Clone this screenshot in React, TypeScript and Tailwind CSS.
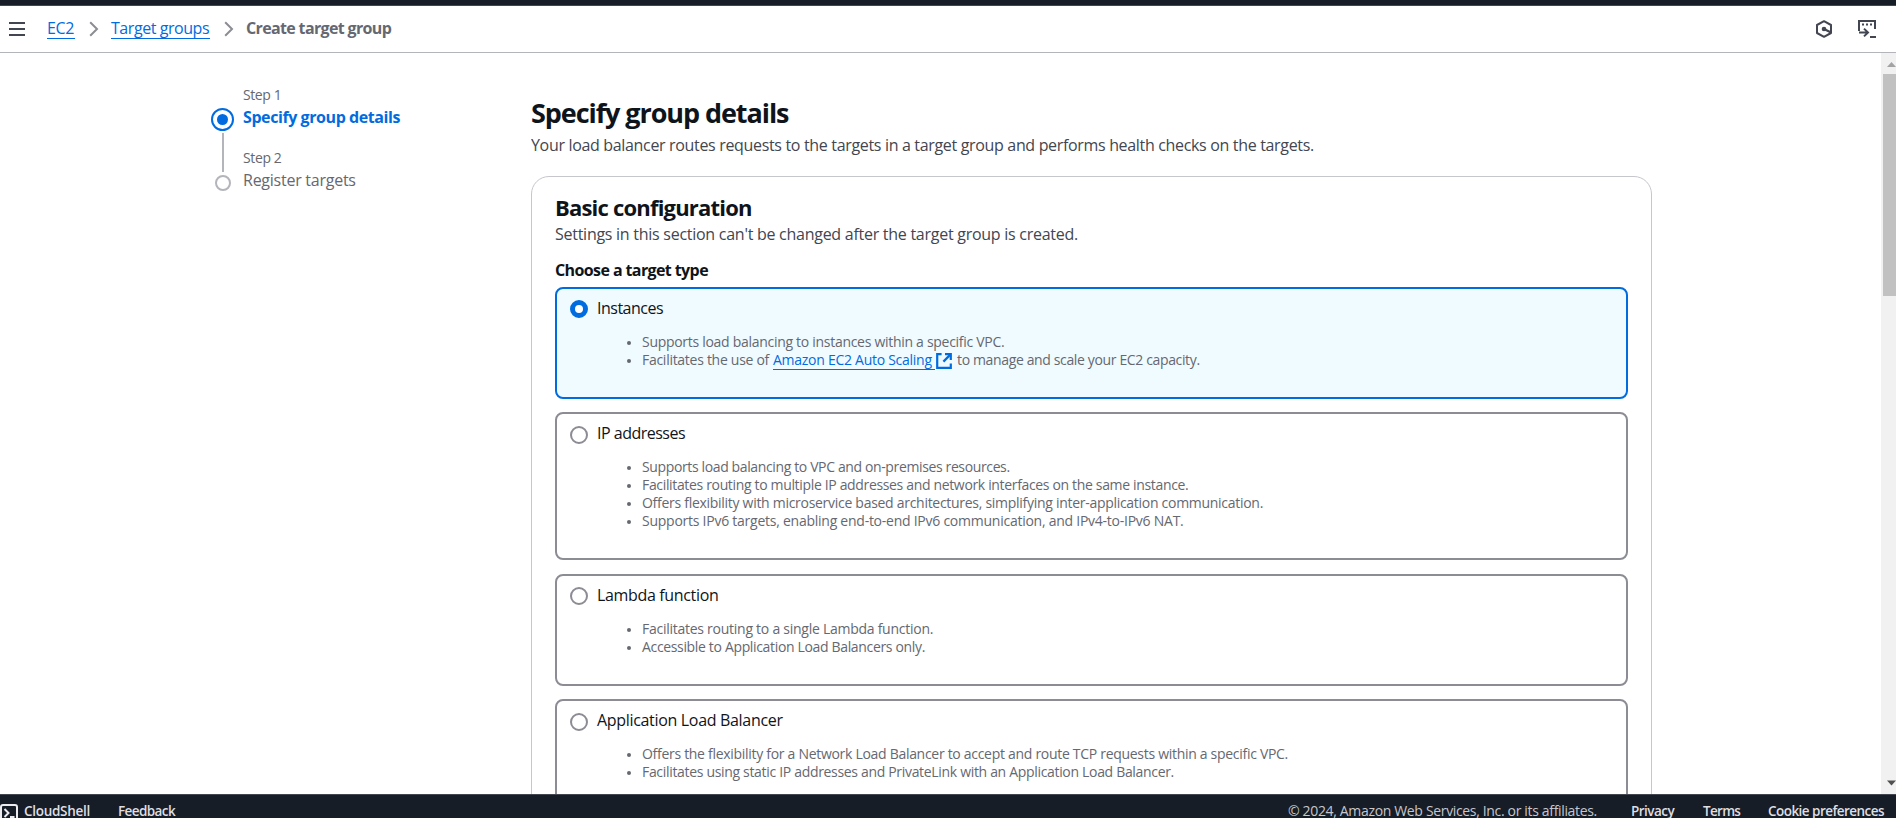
import type { ReactNode } from "react";

type Line = { content: ReactNode; tracking: string };

type TargetType = {
  label: string;
  labelTracking: string;
  size: string;
  radio: string;
  selected?: boolean;
  lines: Line[];
};

const targetTypes: TargetType[] = [
  {
    label: "Instances",
    labelTracking: "tracking-[-0.5px]",
    size: "h-28",
    radio: "mt-[11px]",
    selected: true,
    lines: [
      {
        content: "Supports load balancing to instances within a specific VPC.",
        tracking: "tracking-[-0.29px]",
      },
      { content: <AutoScalingLine />, tracking: "tracking-[-0.3px]" },
    ],
  },
  {
    label: "IP addresses",
    labelTracking: "tracking-[-0.5px]",
    size: "h-[148px] mb-px",
    radio: "mt-3",
    lines: [
      {
        content: "Supports load balancing to VPC and on-premises resources.",
        tracking: "tracking-[-0.37px]",
      },
      {
        content:
          "Facilitates routing to multiple IP addresses and network interfaces on the same instance.",
        tracking: "tracking-[-0.34px]",
      },
      {
        content:
          "Offers flexibility with microservice based architectures, simplifying inter-application communication.",
        tracking: "tracking-[-0.285px]",
      },
      {
        content:
          "Supports IPv6 targets, enabling end-to-end IPv6 communication, and IPv4-to-IPv6 NAT.",
        tracking: "tracking-[-0.25px]",
      },
    ],
  },
  {
    label: "Lambda function",
    labelTracking: "tracking-[-0.34px]",
    size: "h-28",
    radio: "mt-[11px]",
    lines: [
      {
        content: "Facilitates routing to a single Lambda function.",
        tracking: "tracking-[-0.26px]",
      },
      {
        content: "Accessible to Application Load Balancers only.",
        tracking: "tracking-[-0.34px]",
      },
    ],
  },
  {
    label: "Application Load Balancer",
    labelTracking: "tracking-[-0.32px]",
    size: "h-28",
    radio: "mt-3",
    lines: [
      {
        content:
          "Offers the flexibility for a Network Load Balancer to accept and route TCP requests within a specific VPC.",
        tracking: "tracking-[-0.295px]",
      },
      {
        content:
          "Facilitates using static IP addresses and PrivateLink with an Application Load Balancer.",
        tracking: "tracking-[-0.32px]",
      },
    ],
  },
];

function ExternalIcon() {
  return (
    <svg width="16" height="16" viewBox="0 0 16 16" fill="none" stroke="currentColor" strokeWidth="2.2">
      <path d="M5.6 1.2H1.2v13.6h13.6v-4.4" />
      <path d="M9 1.2h5.8V7" />
      <path d="M14.6 1.4 7.4 8.6" />
    </svg>
  );
}

function AutoScalingLine() {
  return (
    <span className="flex">
      <span className="w-[131px] tracking-[-0.28px]">Facilitates the use of</span>
      <span className="flex w-[184px] text-[#006ce0]">
        <span className="h-[19px] w-[162px] border-b border-[#006ce0] tracking-[-0.27px]">
          Amazon EC2 Auto Scaling
        </span>
        <span className="ml-px pt-0.5">
          <ExternalIcon />
        </span>
      </span>
      <span className="tracking-[-0.36px]">to manage and scale your EC2 capacity.</span>
    </span>
  );
}

function Crumb() {
  return (
    <svg width="10" height="16" viewBox="0 0 10 16" fill="none" stroke="#8c8c94" strokeWidth="2">
      <path d="M1.2 1.2 8 8l-6.8 6.8" />
    </svg>
  );
}

function Header() {
  return (
    <header className="flex h-[47px] shrink-0 justify-between border-b border-[#b4b4bb] pt-2 text-base leading-5">
      <nav className="flex">
        <svg className="ml-[9px] mt-2" width="16" height="14" viewBox="0 0 16 14" fill="none" stroke="#424650" strokeWidth="2">
          <path d="M0 1h16M0 7h16M0 13h16" />
        </svg>
        <a className="ml-[22px] mt-1 h-[21px] w-[28px] border-b border-[#006ce0] tracking-[-0.37px] text-[#006ce0]">
          EC2
        </a>
        <span className="ml-[14px] mt-[7px] w-[22px]">
          <Crumb />
        </span>
        <a className="mt-1 h-[21px] w-[99px] border-b border-[#006ce0] tracking-[-0.44px] text-[#006ce0]">
          Target groups
        </a>
        <span className="ml-[14px] mt-[7px] w-[22px]">
          <Crumb />
        </span>
        <span className="mt-1 font-bold tracking-[-0.65px] text-[#656871]">Create target group</span>
      </nav>
      <div className="flex gap-[26px] pr-5 pt-1.5">
        <svg width="16" height="18" viewBox="0 0 16 18" fill="none" stroke="#424650" strokeWidth="2">
          <path d="M8 1.2 15 5v8l-7 3.8L1 13V5z" strokeLinejoin="round" />
          <path d="M8 9l6.5 3.2" strokeWidth="2.2" />
          <circle cx="8" cy="9" r="2.3" fill="#424650" stroke="none" />
        </svg>
        <svg width="18" height="18" viewBox="0 0 18 18" fill="none" stroke="#424650" strokeWidth="2">
          <path d="M1 11V1h16v8" />
          <path d="M4 4.5h2M8 4.5h2M12 4.5h2" />
          <path d="M1 12.5h8.5M6 8.6l4 3.9-4 3.9M12 17h6" />
        </svg>
      </div>
    </header>
  );
}

function Steps() {
  return (
    <aside className="flex w-[531px] shrink-0 pl-[211px] pt-[32px] text-[#656871]">
      <div className="flex w-[32px] flex-col items-center pr-[9px] pt-[23px]">
        <span className="flex size-[23px] items-center justify-center rounded-full border-2 border-[#006ce0]">
          <span className="size-[11px] rounded-full bg-[#006ce0]" />
        </span>
        <span className="mt-0.5 h-[39px] w-0.5 bg-[#b4b4bb]" />
        <span className="mt-[2.5px] size-4 rounded-full border-2 border-[#b4b4bb]" />
      </div>
      <ol className="whitespace-nowrap">
        <li className="h-[63px]">
          <p className="text-sm leading-5 tracking-[-0.42px]">Step 1</p>
          <p className="mt-px text-base font-bold leading-[22px] tracking-[-0.42px] text-[#006ce0]">
            Specify group details
          </p>
        </li>
        <li>
          <p className="text-sm leading-5 tracking-[-0.38px]">Step 2</p>
          <p className="mt-px text-base leading-[22px] tracking-[-0.25px]">Register targets</p>
        </li>
      </ol>
    </aside>
  );
}

function Tile({ item }: { item: TargetType }) {
  const tone = item.selected ? "border-[#006ce0] bg-[#f0fbff]" : "border-[#8c8c94] bg-white";
  return (
    <div className={`flex shrink-0 rounded-lg border-2 pl-[13px] ${item.size} ${tone}`}>
      <div className={`w-[27px] shrink-0 ${item.radio}`}>
        {item.selected ? (
          <span className="block size-[18px] rounded-full border-[5.5px] border-[#006ce0] bg-white" />
        ) : (
          <span className="block size-[18px] rounded-full border-2 border-[#8c8c94] bg-white" />
        )}
      </div>
      <div className="whitespace-nowrap">
        <p className={`mt-[9px] text-base leading-5 text-[#0f141a] ${item.labelTracking}`}>{item.label}</p>
        <ul className="mt-[15px] pl-[30px] text-sm leading-[18px] text-[#656871]">
          {item.lines.map((line, i) => (
            <li key={i} className={`flex h-[18px] ${line.tracking}`}>
              <span className="mr-[11px] mt-2 size-1 shrink-0 rounded-full bg-[#656871]" />
              {line.content}
            </li>
          ))}
        </ul>
      </div>
    </div>
  );
}

function Scrollbar() {
  return (
    <div className="flex w-[15px] shrink-0 flex-col bg-[#f1f1f1] pl-0.5">
      <svg width="13" height="21" viewBox="0 0 13 21">
        <path d="M8.5 9 13 14H4z" fill="#a3a3a3" />
      </svg>
      <div className="h-[222px] bg-[#c1c1c1]" />
      <svg className="mt-auto" width="13" height="21" viewBox="0 0 13 21">
        <path d="M4 7.500h9l-4.500 5z" fill="#505050" />
      </svg>
    </div>
  );
}

function Footer() {
  return (
    <footer className="flex h-6 shrink-0 overflow-hidden whitespace-nowrap border-t border-[#424650] bg-[#161d26] pt-1.5 text-[13.5px] font-semibold leading-5 text-[#dedee3]">
      <svg className="mt-[3px] w-6 shrink-0" width="24" height="18" viewBox="0 0 24 18" fill="none" stroke="#ebebf0" strokeWidth="2">
        <rect x="1" y="1" width="16" height="16" rx="2" />
        <path d="m4.500 5 4 4-4 4M10 13h4.500" />
      </svg>
      <span className="w-[94px] tracking-[-0.29px]">CloudShell</span>
      <span className="tracking-[-0.6px]">Feedback</span>
      <span className="ml-auto w-[343px] text-sm font-normal leading-5 tracking-[-0.34px] text-[#c6c6cd]">
        © 2024, Amazon Web Services, Inc. or its affiliates.
      </span>
      <span className="w-[72px] tracking-[-0.52px]">Privacy</span>
      <span className="w-[65px] tracking-[-0.7px]">Terms</span>
      <span className="w-[128px] tracking-[-0.54px]">Cookie preferences</span>
    </footer>
  );
}

export default function App() {
  return (
    <div className="flex h-[818px] w-[1896px] flex-col overflow-hidden bg-white font-['Open_Sans','Noto_Sans',sans-serif]">
      <div className="h-1.5 shrink-0 border-b border-[#424650] bg-[#161d26]" />
      <Header />
      <div className="flex min-h-0 flex-1">
        <Steps />
        <main className="flex w-[1121px] shrink-0 flex-col overflow-hidden whitespace-nowrap pt-11">
          <h1 className="text-[27px] font-bold leading-8 tracking-[-1.07px] text-[#0f141a]">
            Specify group details
          </h1>
          <p className="mt-1.5 text-base leading-5 tracking-[-0.33px] text-[#424650]">
            Your load balancer routes requests to the targets in a target group and performs health checks
            on the targets.
          </p>
          <section className="mt-[21px] flex h-[700px] shrink-0 flex-col rounded-[18px] border border-[#c6c6cd] px-[23px] pt-4">
            <h2 className="text-[22px] font-bold leading-7 tracking-[-0.8px] text-[#0f141a]">
              Basic configuration
            </h2>
            <p className="mt-[3px] text-base leading-5 tracking-[-0.265px] text-[#424650]">
              Settings in this section can't be changed after the target group is created.
            </p>
            <p className="mt-4 text-base font-bold leading-5 tracking-[-0.6px] text-[#0f141a]">
              Choose a target type
            </p>
            <div className="mt-[7px] flex flex-col gap-[13px]">
              {targetTypes.map((item) => (
                <Tile key={item.label} item={item} />
              ))}
            </div>
          </section>
        </main>
        <div className="flex-1" />
        <Scrollbar />
      </div>
      <Footer />
    </div>
  );
}
